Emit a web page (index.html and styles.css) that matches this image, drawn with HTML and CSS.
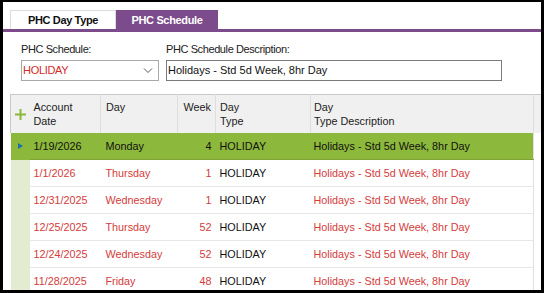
FILE: index.html
```html
<!DOCTYPE html>
<html>
<head>
    <title>PHC Schedule</title>
    <link rel="stylesheet" href="styles.css">
</head>
<body>
    <div class="window">
        <div class="tabs">
            <div class="tab">PHC Day Type</div>
            <div class="tab active">PHC Schedule</div>
        </div>

        <div class="form">
            <div class="field">
                <label>PHC Schedule:</label>
                <div class="select">
                    <span>HOLIDAY</span>
                    <svg width="10" height="6" viewBox="0 0 10 6"><path d="M1 0.5 L5 4.5 L9 0.5" fill="none" stroke="#555" stroke-width="1"/></svg>
                </div>
            </div>
            <div class="field">
                <label>PHC Schedule Description:</label>
                <div class="textbox">Holidays - Std 5d Week, 8hr Day</div>
            </div>
        </div>

        <div class="grid">
            <table>
                <colgroup>
                    <col class="w-add">
                    <col class="w-date">
                    <col class="w-day">
                    <col class="w-week">
                    <col class="w-type">
                    <col class="w-desc">
                    <col class="w-fill">
                </colgroup>
                <thead>
                    <tr>
                        <th class="add"><svg width="11" height="11" viewBox="0 0 11 11"><path d="M5.5 0 V11 M0 5.5 H11" stroke="#8bb83a" stroke-width="2"/></svg></th>
                        <th>Account<br>Date</th>
                        <th class="day">Day</th>
                        <th class="num">Week</th>
                        <th>Day<br>Type</th>
                        <th class="desc">Day<br>Type Description</th>
                        <th class="fill"></th>
                    </tr>
                </thead>
                <tbody>
                    <tr class="selected">
                        <td class="add"><span class="arrow"></span></td>
                        <td>1/19/2026</td>
                        <td class="day">Monday</td>
                        <td class="num">4</td>
                        <td class="type">HOLIDAY</td>
                        <td class="desc">Holidays - Std 5d Week, 8hr Day</td>
                        <td class="fill"></td>
                    </tr>
                    <tr>
                        <td class="add"></td>
                        <td>1/1/2026</td>
                        <td class="day">Thursday</td>
                        <td class="num">1</td>
                        <td class="type">HOLIDAY</td>
                        <td class="desc">Holidays - Std 5d Week, 8hr Day</td>
                        <td class="fill"></td>
                    </tr>
                    <tr>
                        <td class="add"></td>
                        <td>12/31/2025</td>
                        <td class="day">Wednesday</td>
                        <td class="num">1</td>
                        <td class="type">HOLIDAY</td>
                        <td class="desc">Holidays - Std 5d Week, 8hr Day</td>
                        <td class="fill"></td>
                    </tr>
                    <tr>
                        <td class="add"></td>
                        <td>12/25/2025</td>
                        <td class="day">Thursday</td>
                        <td class="num">52</td>
                        <td class="type">HOLIDAY</td>
                        <td class="desc">Holidays - Std 5d Week, 8hr Day</td>
                        <td class="fill"></td>
                    </tr>
                    <tr>
                        <td class="add"></td>
                        <td>12/24/2025</td>
                        <td class="day">Wednesday</td>
                        <td class="num">52</td>
                        <td class="type">HOLIDAY</td>
                        <td class="desc">Holidays - Std 5d Week, 8hr Day</td>
                        <td class="fill"></td>
                    </tr>
                    <tr>
                        <td class="add"></td>
                        <td>11/28/2025</td>
                        <td class="day">Friday</td>
                        <td class="num">48</td>
                        <td class="type">HOLIDAY</td>
                        <td class="desc">Holidays - Std 5d Week, 8hr Day</td>
                        <td class="fill"></td>
                    </tr>
                </tbody>
            </table>
        </div>
    </div>
</body>
</html>
```
FILE: styles.css
```css
/* GENERAL */
body {
    margin: 0;
    padding: 0;
    background-color: #000;
}

.window {
    box-sizing: border-box;
    width: 538px;
    height: 288px;
    margin: 2px 0 0 3px;
    background-color: #fff;
    overflow: hidden;
    font-family: 'Liberation Sans', Arial, sans-serif;
}


/* TABS */
.tabs {
    display: flex;
    padding: 8px 0 0 7px;
    border-bottom: 3px solid #7b4b8b;
}

.tab {
    box-sizing: border-box;
    width: 106px;
    height: 19px;
    line-height: 19px;
    text-align: center;
    font-size: 11px;
    letter-spacing: -0.35px;
    font-weight: bold;
    color: #111;
    border: 1px solid #dcdcdc;
    border-bottom: none;
}

.tab.active {
    width: 102px;
    background-color: #7b4b8b;
    border-color: #7b4b8b;
    color: #fff;
}


/* FORM */
.form {
    display: flex;
    gap: 7px;
    padding: 11px 0 0 18px;
}

.field label {
    display: block;
    font-size: 11px;
    letter-spacing: -0.4px;
    color: #222;
    height: 17px;
}

.select, .textbox {
    box-sizing: border-box;
    height: 21px;
    border: 1px solid #7a7a7a;
    font-size: 11px;
    line-height: 19px;
    padding-left: 1px;
}

.select {
    display: flex;
    align-items: center;
    justify-content: space-between;
    width: 138px;
    padding-right: 5px;
    border-color: #a8a8a8;
    color: #d42a2a;
    letter-spacing: -0.3px;
}

.textbox {
    width: 336px;
    color: #111;
}


/* GRID */
.grid {
    margin: 13px 0 0 7px;
}

.grid table {
    table-layout: fixed;
    width: 531px;
    border-collapse: collapse;
    font-size: 10.8px;
}

.w-add { width: 19px; }
.w-date { width: 71px; }
.w-day { width: 77px; }
.w-week { width: 38px; }
.w-type { width: 95px; }
.w-desc { width: 223px; }
.w-fill { width: 8px; }

.grid th, .grid td {
    box-sizing: border-box;
}

.grid th {
    height: 38px;
    background-color: #f0f0f0;
    font-weight: normal;
    text-align: left;
    vertical-align: top;
    padding: 5px 4px 0 4px;
    color: #222;
    border-top: 1px solid #c8c8c8;
    border-right: 1px solid #dedede;
    line-height: 14px;
}

.grid th.add {
    vertical-align: middle;
    padding: 4px 0 0 4px;
    border-left: 1px solid #c8c8c8;
    border-right: none;
}

.grid th.fill {
    border-right: none;
}

.grid td {
    height: 27px;
    padding: 0 4px;
    color: #d43c3c;
    border-bottom: 1px solid #e8e8e8;
    white-space: nowrap;
}

.grid .day {
    padding-left: 5px;
}

.grid .desc {
    padding-left: 3px;
}

.grid td.desc {
    border-right: 1px solid #e0e0e0;
}

.grid td.fill {
    border-bottom: none;
}

.grid td.add {
    padding: 0;
    background-color: #e3ebd0;
    border-bottom: none;
}

.grid td.type {
    color: #111;
}

.grid .num {
    text-align: right;
}

.grid tr.selected td {
    background-color: #8cb83b;
    color: #111;
    border-bottom: 1px solid #7ea534;
}

.grid tr.selected td.add {
    border-bottom: none;
}

.grid tr.selected td.fill {
    background-color: #fff;
    border-bottom: none;
}

.arrow {
    display: block;
    width: 0;
    height: 0;
    margin-left: 7px;
    border-top: 3.5px solid transparent;
    border-bottom: 3.5px solid transparent;
    border-left: 5px solid #1f6fa8;
}
```
